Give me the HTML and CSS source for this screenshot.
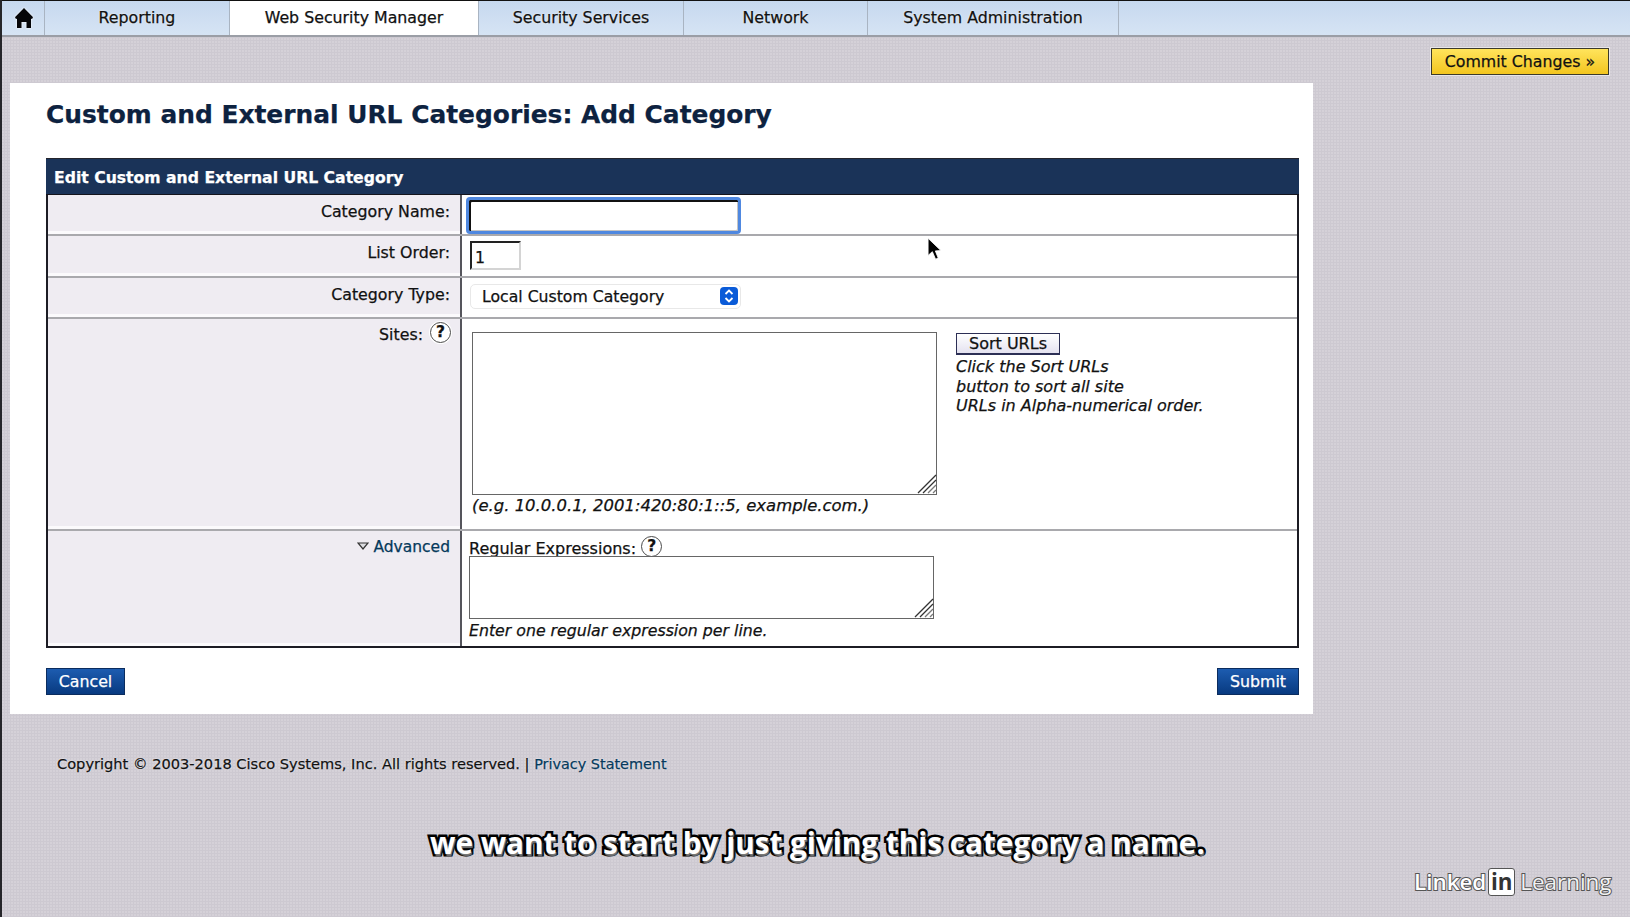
FILE: index.html

```html
<!DOCTYPE html>
<html>
<head>
<meta charset="utf-8">
<title>Custom and External URL Categories: Add Category</title>
<link rel="stylesheet" href="styles.css">
</head>

<body>
<nav class="nav">
    <a class="tab home-tab">
        <svg class="home-icon" viewBox="0 0 18 20"><path d="M9 0 L17.6 8.8 Q18.6 11 16 11 L16 20 L11.5 20 L11.5 14 L6.5 14 L6.5 20 L2 20 L2 11 Q-0.6 11 0.4 8.8 Z" fill="#050508"/></svg>
    </a>
    <a class="tab tab-reporting">Reporting</a>
    <a class="tab tab-active">Web Security Manager</a>
    <a class="tab tab-security">Security Services</a>
    <a class="tab tab-network">Network</a>
    <a class="tab tab-system">System Administration</a>
</nav>

<div class="commit-bar">
    <button class="commit-btn">Commit Changes »</button>
</div>

<main class="panel">
    <h1 class="title">Custom and External URL Categories: Add Category</h1>

    <section class="form-box">
        <div class="form-head">Edit Custom and External URL Category</div>

        <div class="row row-name">
            <div class="label">Category Name:</div>
            <div class="field"><input class="name-input" type="text"></div>
        </div>

        <div class="row row-order">
            <div class="label">List Order:</div>
            <div class="field"><input class="order-input" type="text" value="1"></div>
        </div>

        <div class="row row-type">
            <div class="label">Category Type:</div>
            <div class="field">
                <div class="select-wrap">
                    <select class="type-select"><option>Local Custom Category</option></select>
                    <span class="select-badge">
                        <svg viewBox="0 0 16 18"><path d="M4.5 7 L8 3.5 L11.5 7 M4.5 11 L8 14.5 L11.5 11" fill="none" stroke="#fff" stroke-width="1.8"/></svg>
                    </span>
                </div>
            </div>
        </div>

        <div class="row row-sites">
            <div class="label label-sites">Sites: <span class="help">?</span></div>
            <div class="field field-sites">
                <div class="sites-left">
                    <div class="area-wrap">
                        <textarea class="sites-area"></textarea>
                        <svg class="grip" viewBox="0 0 20 20"><path d="M19 1 L1 19 M19 6 L6 19" stroke="#333" stroke-width="1.3" fill="none"/><path d="M19 11 L11 19 M19 16 L16 19" stroke="#777" stroke-width="1.3" fill="none"/></svg>
                    </div>
                    <div class="note note-example">(e.g. 10.0.0.1, 2001:420:80:1::5, example.com.)</div>
                </div>
                <div class="sites-right">
                    <button class="sort-btn">Sort URLs</button>
                    <div class="note">Click the Sort URLs<br>button to sort all site<br>URLs in Alpha-numerical order.</div>
                </div>
            </div>
        </div>

        <div class="row row-advanced">
            <div class="label label-advanced">
                <svg class="arrow" viewBox="0 0 12 8"><path d="M1 1 L11 1 L6 7 Z" fill="#dcdce0" stroke="#333" stroke-width="1.2"/></svg>
                <a class="link">Advanced</a>
            </div>
            <div class="field field-advanced">
                <div class="regex-label">Regular Expressions: <span class="help">?</span></div>
                <div class="area-wrap">
                    <textarea class="regex-area"></textarea>
                    <svg class="grip" viewBox="0 0 20 20"><path d="M19 1 L1 19 M19 6 L6 19" stroke="#333" stroke-width="1.3" fill="none"/><path d="M19 11 L11 19 M19 16 L16 19" stroke="#777" stroke-width="1.3" fill="none"/></svg>
                </div>
                <div class="note note-regex">Enter one regular expression per line.</div>
            </div>
        </div>
    </section>

    <div class="actions">
        <button class="blue-btn btn-cancel">Cancel</button>
        <button class="blue-btn btn-submit">Submit</button>
    </div>
</main>

<footer class="footer">Copyright © 2003-2018 Cisco Systems, Inc. All rights reserved. | <a class="link">Privacy Statement</a></footer>

<!-- things burned into the video on top of the page -->
<svg class="cursor" viewBox="0 0 14 22"><path d="M1 1 L1 17 L5 13.5 L8 20.5 L10.5 19.5 L7.8 12.8 L13 12.5 Z" fill="#000" stroke="#fff" stroke-width="0.8"/></svg>
<div class="caption">we want to start by just giving this category a name.</div>
<div class="logo"><span class="logo-word">Linked</span><span class="logo-in">in</span><span class="logo-word logo-thin">Learning</span></div>
</body>
</html>
```

FILE: styles.css

```css
* {
  box-sizing: border-box;
}

html, body {
  margin: 0;
  height: 917px;
  overflow: hidden;
}

body {
  position: relative;
  border-left: 2px solid #26262a;
  font-family: "DejaVu Sans", sans-serif;
  font-size: 15.8px;
  color: #111;
  -webkit-text-stroke: 0.25px currentColor;
  background-color: #d5d1d8;
  background-image: radial-gradient(circle at center, #cdc9d1 0, #cdc9d1 1px, transparent 1.2px);
  background-size: 3px 3px;
}

/* top nav */
.nav {
  display: flex;
  height: 37px;
  border-top: 1px solid #111;
  border-bottom: 2px solid #9b9ea6;
  background: linear-gradient(#c6d8ef, #d6e4f4);
}

.tab {
  display: flex;
  align-items: center;
  justify-content: center;
  height: 100%;
  padding-bottom: 1px;
  border-right: 1px solid #a9b4c2;
  text-shadow: 0 0 2px #fff;
}

.home-tab { width: 43px; padding: 0 0 1px 2px; }
.tab-reporting { width: 185px; }
.tab-active { width: 249px; background: #fff; }
.tab-security { width: 205px; }
.tab-network { width: 184px; }
.tab-system { width: 251px; }

.home-icon {
  width: 18px;
  height: 20px;
  filter: drop-shadow(0 0 1px #fff);
}

.commit-bar {
  display: flex;
  justify-content: flex-end;
  padding: 11px 21px 0 0;
  height: 46px;
}

.commit-btn {
  width: 178px;
  height: 27px;
  padding: 0;
  border: 1px solid #3c3a2a;
  font-family: inherit;
  font-size: 15.8px;
  color: #111;
  -webkit-text-stroke: 0.25px currentColor;
  background: linear-gradient(#ffe45c, #f3c51f);
  box-shadow: 0 0 0 1px #e8e6ea;
}

/* white panel */
.panel {
  width: 1303px;
  height: 631px;
  margin-left: 8px;
  padding: 0 14px 0 36px;
  background: #fff;
}

.title {
  margin: 0;
  padding-top: 15px;
  height: 75px;
  font-size: 24.9px;
  line-height: 34px;
  color: #0d2240;
}

.form-box {
  height: 490px;
  border: 2px solid #1c1c24;
  border-top: 0;
}

.form-head {
  height: 37px;
  margin: 0 -2px;
  padding-left: 8px;
  border-top: 1px solid #24242c;
  border-bottom: 1px solid #14141c;
  font-size: 15.65px;
  font-weight: bold;
  line-height: 37px;
  color: #fff;
  background: #1a3358;
}

.row {
  display: flex;
  border-bottom: 2px solid #a9a9ad;
}

.row-name { height: 41px; }
.row-order { height: 42px; }
.row-type { height: 41px; }
.row-sites { height: 212px; }
.row-advanced { height: 115px; border-bottom: 0; }

.label {
  width: 414px;
  padding: 7px 10px 0 0;
  flex-shrink: 0;
  text-align: right;
  background: #efecf2;
  border-right: 2px solid #55555c;
  box-shadow: inset 0 -3px 0 #fbfafc;
}

.field {
  flex: 1;
  padding-left: 4px;
}

.row-name .field { padding-top: 2px; }
.row-order .field { padding-top: 5px; padding-left: 8px; }
.row-type .field { padding-top: 6px; padding-left: 8px; }

.name-input {
  display: block;
  width: 275px;
  height: 37px;
  border: 3px solid #4f88e0;
  border-radius: 4px;
  outline: 0;
  background: #fff;
  box-shadow: inset 2px 2px 0 #111, inset -1px -1px 0 #c4c4c4;
}

.order-input {
  display: block;
  width: 51px;
  height: 29px;
  padding: 3px 0 0 3px;
  border: 2px solid #d4d4d4;
  border-top-color: #222;
  border-left-color: #222;
  font-family: inherit;
  font-size: 15.8px;
  color: #111;
}

.select-wrap {
  position: relative;
  width: 271px;
}

.type-select {
  display: block;
  width: 100%;
  height: 25px;
  padding-left: 11px;
  border: 1px solid #e8e8e8;
  border-radius: 5px;
  font-family: inherit;
  font-size: 15.7px;
  color: #111;
  -webkit-text-stroke: 0.25px currentColor;
  background: #fff;
  appearance: none;
}

.select-badge {
  position: absolute;
  top: 3px;
  right: 3px;
  width: 18px;
  height: 18px;
  border-radius: 4px;
  background: #0a5bd8;
}

.select-badge svg {
  display: block;
  width: 100%;
  height: 100%;
}

.help {
  display: inline-block;
  width: 21px;
  height: 21px;
  margin-left: 2px;
  border: 1.5px solid #4a4a4a;
  border-radius: 50%;
  font-size: 15.5px;
  font-weight: bold;
  line-height: 18px;
  text-align: center;
  vertical-align: 3px;
  background: #fff;
  box-shadow: 0 0 0 1px #fff;
}

.regex-label .help {
  margin-left: 0;
}

.field-sites {
  display: flex;
  padding: 13px 0 0 10px;
}

.sites-left {
  width: 484px;
}

.area-wrap {
  position: relative;
}

textarea {
  display: block;
  padding: 2px;
  border: 1px solid #666;
  background: #fff;
  resize: none;
}

.sites-area {
  width: 465px;
  height: 163px;
}

.regex-area {
  width: 465px;
  height: 63px;
}

.grip {
  position: absolute;
  width: 20px;
  height: 20px;
  left: 445px;
  bottom: 1px;
}

.note {
  margin-top: 2px;
  font-size: 16px;
  font-style: italic;
  line-height: 19.7px;
}

.note-example {
  margin-top: 1px;
  font-size: 16.45px;
}

.note-regex {
  margin-top: 2px;
  font-size: 15.75px;
}

.sort-btn {
  display: block;
  width: 104px;
  height: 22px;
  margin-top: 1px;
  padding: 0;
  border: 1px solid #2c2f55;
  border-bottom-width: 2px;
  font-family: inherit;
  font-size: 16px;
  color: #111;
  -webkit-text-stroke: 0.25px currentColor;
  background: linear-gradient(#fff, #e4e2f0);
}

.label-sites {
  padding: 3px 9px 0 0;
}

.label-advanced {
  padding-top: 7px;
  font-size: 15.5px;
}

.arrow {
  width: 12px;
  height: 8px;
  margin: 0 0 3px 0;
  vertical-align: middle;
}

.link {
  color: #053a5c;
}

.field-advanced {
  padding: 5px 0 0 7px;
}

.regex-label {
  height: 20px;
  font-size: 16px;
  line-height: 22px;
  white-space: nowrap;
}

.actions {
  display: flex;
  justify-content: space-between;
  margin-top: 20px;
}

.blue-btn {
  height: 27px;
  padding: 0;
  border: 1px solid #0b2c5e;
  font-family: inherit;
  font-size: 15.8px;
  color: #fff;
  -webkit-text-stroke: 0.25px currentColor;
  background: linear-gradient(#1d5cb0, #083a80);
}

.btn-cancel { width: 79px; }
.btn-submit { width: 82px; }

.footer {
  padding: 41px 0 0 55px;
  font-size: 14.6px;
  text-shadow: 0 0 2px #fff;
}

.footer .link {
  font-size: 14.4px;
}

/* overlays */
.cursor {
  position: absolute;
  left: 925px;
  top: 237px;
  width: 15px;
  height: 24px;
}

.caption {
  position: absolute;
  left: 428px;
  top: 822px;
  font-family: "Open Sans", sans-serif;
  font-size: 29.7px;
  font-weight: 700;
  line-height: 42px;
  white-space: nowrap;
  color: #fff;
  -webkit-text-stroke: 5px #000;
  paint-order: stroke fill;
  text-shadow: 1px 2px 1px #777;
}

.logo {
  position: absolute;
  left: 1412px;
  top: 867px;
  display: flex;
  align-items: center;
  font-family: "Open Sans", sans-serif;
  font-size: 22.4px;
  line-height: 30px;
  color: #fff;
}

.logo-word {
  font-weight: 600;
  -webkit-text-stroke: 2px #555;
  paint-order: stroke fill;
}

.logo-thin {
  margin-left: 5px;
  font-weight: 400;
  color: #f2f2f2;
}

.logo-in {
  width: 27px;
  height: 28px;
  margin-left: 2px;
  border: 1px solid #555;
  border-radius: 3px;
  font-weight: 700;
  line-height: 26px;
  text-align: center;
  color: #333;
  -webkit-text-stroke: 0;
  background: #fff;
}
```
